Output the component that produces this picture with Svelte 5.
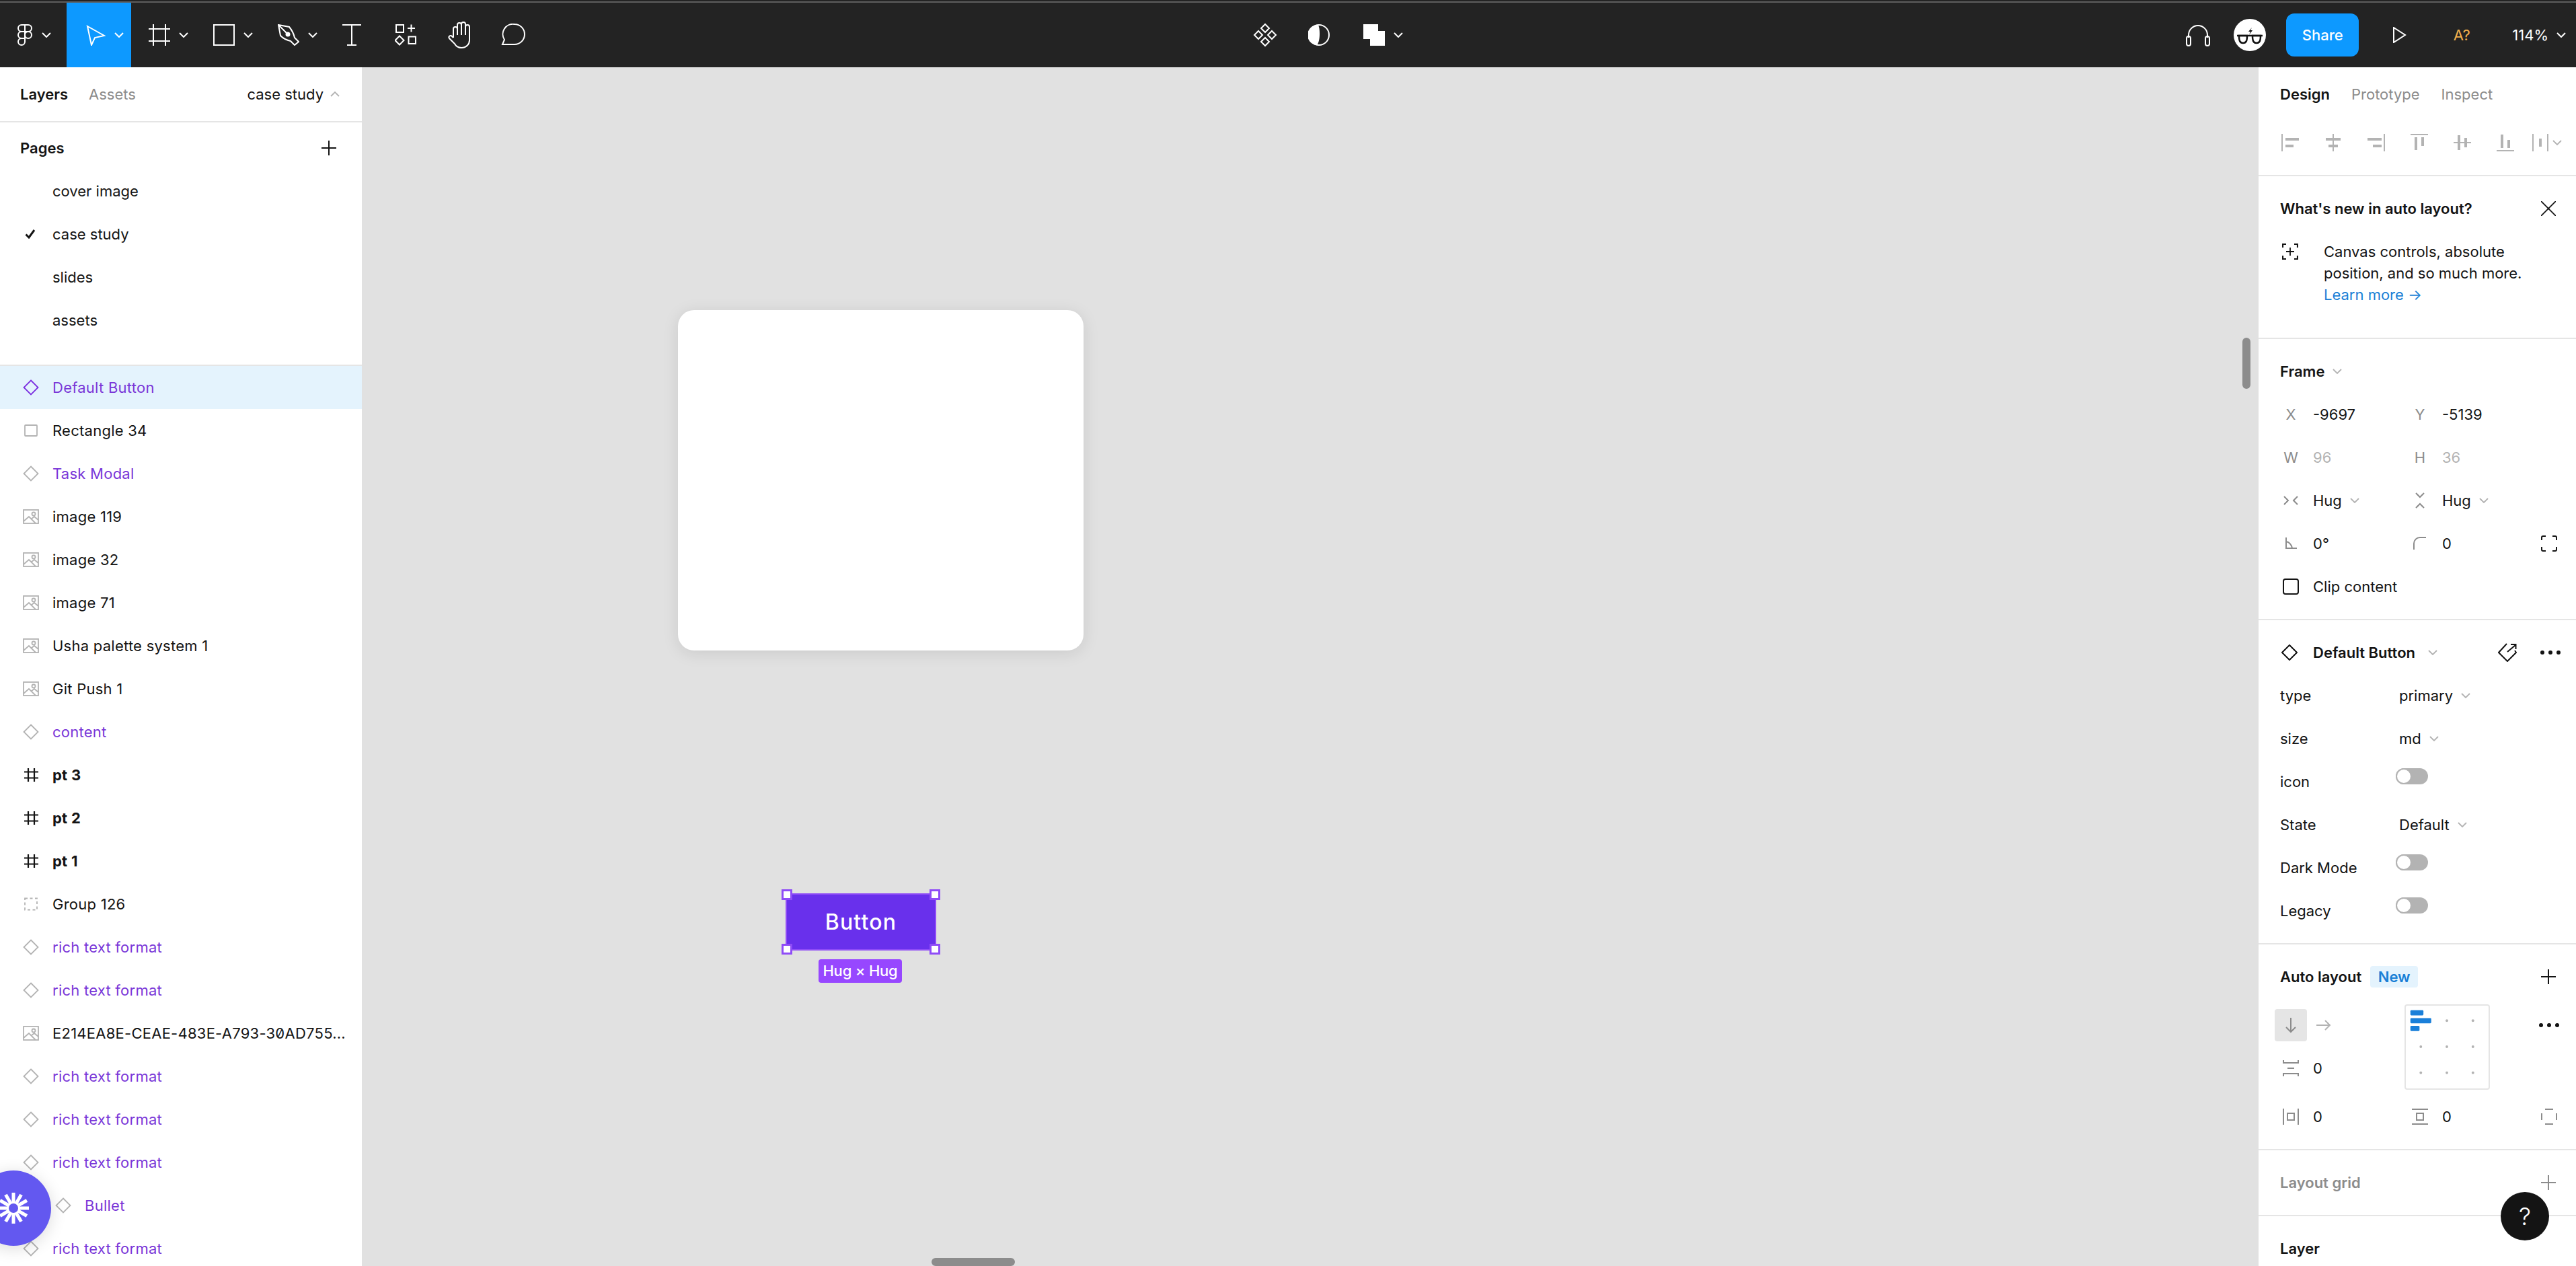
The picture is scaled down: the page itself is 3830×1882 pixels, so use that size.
<script>
  const pages = [
    { name: 'cover image' },
    { name: 'case study', current: true },
    { name: 'slides' },
    { name: 'assets' }
  ]

  const rtf = { name: 'rich text format', kind: 'comp' }
  const layers = [
    { name: 'Default Button', kind: 'comp', selected: true },
    { name: 'Rectangle 34', kind: 'rect' },
    { name: 'Task Modal', kind: 'comp' },
    { name: 'image 119', kind: 'image' },
    { name: 'image 32', kind: 'image' },
    { name: 'image 71', kind: 'image' },
    { name: 'Usha palette system 1', kind: 'image' },
    { name: 'Git Push 1', kind: 'image' },
    { name: 'content', kind: 'comp' },
    { name: 'pt 3', kind: 'frame' },
    { name: 'pt 2', kind: 'frame' },
    { name: 'pt 1', kind: 'frame' },
    { name: 'Group 126', kind: 'group' },
    rtf,
    rtf,
    { name: 'E214EA8E-CEAE-483E-A793-30AD755...', kind: 'image', mono: true },
    rtf,
    rtf,
    rtf,
    { name: 'Bullet', kind: 'comp', indent: true },
    rtf
  ]

  // lines and bars of the align buttons, in a 26 x 26 box
  const aligns = [
    { lines: [[1, 0, 1, 26]], bars: [[6, 6, 20, 4], [6, 16, 12, 4]] },
    { lines: [[13, 0, 13, 26]], bars: [[2, 6, 22, 4], [6, 16, 14, 4]] },
    { lines: [[25, 0, 25, 26]], bars: [[0, 6, 21, 4], [8, 16, 13, 4]] },
    { lines: [[0, 1, 26, 1]], bars: [[6, 5, 4, 19], [16, 5, 4, 13]] },
    { lines: [[0, 13, 26, 13]], bars: [[6, 2, 4, 22], [16, 6, 4, 14]] },
    { lines: [[0, 25, 26, 25]], bars: [[6, 1, 4, 20], [16, 9, 4, 12]] }
  ]

  const dots = [
    [63, 23], [103, 23],
    [23, 63], [63, 63], [103, 63],
    [23, 103], [63, 103], [103, 103]
  ]

  const spokes = Array.from({ length: 12 }, (_, i) => i * 30)
</script>

{#snippet chevron(cls)}
  <svg class="chev {cls}" viewBox="0 0 14 8"><path d="M1 1l6 6 6-6" /></svg>
{/snippet}

{#snippet layerIcon(kind, selected)}
  <svg class="layer-ic" class:sel={selected} class:dark={kind === 'frame'} viewBox="0 0 24 24">
    {#if kind === 'comp'}
      <path d="M12 1.5L22.5 12 12 22.5 1.5 12z" />
    {:else if kind === 'rect'}
      <rect x="3" y="4" width="18" height="16" rx="1" />
    {:else if kind === 'image'}
      <rect x="1" y="2" width="22" height="20" />
      <path d="M1 19l8-7 10 10M13 15l4-3 6 5" />
      <circle cx="16" cy="8" r="2.5" />
    {:else if kind === 'frame'}
      <path d="M8 2v20M17 2v20M2 7.5h21M2 16.5h21" />
    {:else}
      <rect x="3" y="3.5" width="18" height="17" stroke-dasharray="4 3.5" />
    {/if}
  </svg>
{/snippet}

<div class="app">
  <div class="topline"></div>
  <header class="toolbar">
    <button class="tool menu">
      <svg class="t-ic" width="32" height="32" viewBox="-5 0 32 32">
        <path d="M6 1h5v10H6a5 5 0 0 1 0-10zM11 1h5a5 5 0 0 1 0 10h-5zM6 11h5v10H6a5 5 0 0 1 0-10zM6 21h5v5a5 5 0 1 1-5-5z" />
        <circle cx="16" cy="16" r="5" />
      </svg>
      {@render chevron('white')}
    </button>
    <button class="tool active">
      <svg class="t-ic" width="32" height="32" viewBox="0 0 32 32"><path d="M5 3l25 14-14 3-5 11z" /></svg>
      {@render chevron('white')}
    </button>
    <button class="tool">
      <svg class="t-ic" width="32" height="32" viewBox="0 0 32 32"><path d="M7 0v32M25 0v32M0 7h32M0 25h32" /></svg>
      {@render chevron('white')}
    </button>
    <button class="tool">
      <svg class="t-ic" width="32" height="32" viewBox="0 0 32 32"><rect x="1" y="1" width="30" height="30" /></svg>
      {@render chevron('white')}
    </button>
    <button class="tool">
      <svg class="t-ic" width="32" height="32" viewBox="0 0 32 32">
        <path d="M1 1l16 3c5 6 7 11 8 16l6 6-6 5-6-6c-5-1-10-3-15-8zM1 1l12 12" />
        <circle cx="15" cy="15" r="2.5" fill="#fff" />
      </svg>
      {@render chevron('white')}
    </button>
    <button class="tool plain">
      <svg class="t-ic" width="28" height="32" viewBox="0 0 28 32"><path d="M0 1h28M14 1v30M7 31h14" /></svg>
    </button>
    <button class="tool plain">
      <svg class="t-ic" width="32" height="32" viewBox="0 0 32 32">
        <path d="M2 1h11v11H2zM24.5 0.500v11M19 6h11M7 17.500l6.500 6.500L7 30.500.5 24zM20.500 18.500H31V29H20.500z" />
      </svg>
    </button>
    <button class="tool plain">
      <svg class="t-ic" width="34" height="40" viewBox="0 0 34 40">
        <path d="M8 24V11a3 3 0 0 1 6 0v9V5a3 3 0 0 1 6 0v15V4a3 3 0 0 1 6 0v16V8a3 3 0 0 1 6 0v20c0 6-5 11-12 11-5 0-8-2-10-6L2 25a2.500 2.500 0 0 1 4-3l2 2" />
      </svg>
    </button>
    <button class="tool plain">
      <svg class="t-ic" width="36" height="34" viewBox="0 0 36 34">
        <path d="M20 1a15 15 0 0 1 0 30H2l3-7A15 15 0 0 1 20 1z" />
      </svg>
    </button>

    <div class="center-tools">
      <button class="tool plain">
        <svg class="t-ic" width="36" height="36" viewBox="0 0 36 36">
          <path d="M18 2l6 6-6 6-6-6zM8 12l6 6-6 6-6-6zM28 12l6 6-6 6-6-6zM18 22l6 6-6 6-6-6z" />
        </svg>
      </button>
      <button class="tool plain">
        <svg class="t-ic" width="32" height="32" viewBox="0 0 32 32">
          <circle cx="16" cy="16" r="15" />
          <path class="solid" d="M15 1A15 15 0 0 0 13 31C18 26 18 7 15 1z" />
        </svg>
      </button>
      <button class="tool">
        <svg class="t-ic" width="32" height="32" viewBox="0 0 32 32">
          <path class="solid" d="M0 0h22v10h10v22H10V22H0z" />
        </svg>
        {@render chevron('white')}
      </button>
    </div>

    <div class="right-tools">
      <button class="tool plain">
        <svg class="t-ic" width="36" height="34" viewBox="0 0 36 34">
          <path d="M4 21v-4a14 14 0 0 1 28 0v4" />
          <rect x="1" y="19" width="6" height="14" rx="3" />
          <rect x="29" y="19" width="6" height="14" rx="3" />
        </svg>
      </button>
      <svg class="avatar" width="48" height="48" viewBox="0 0 48 48">
        <circle cx="24" cy="24" r="24" fill="#fff" />
        <path d="M27 13l-5 6h3l-2 5 5-7h-3z" fill="#111" />
        <path d="M5 25h38" stroke="#111" stroke-width="2.500" fill="none" />
        <path d="M8 25h12c0 7-1 11-6 11s-6-4-6-11zM28 25h12c0 7-1 11-6 11s-6-4-6-11z" stroke="#111" stroke-width="2.500" fill="none" />
      </svg>
      <button class="share">Share</button>
      <button class="tool plain play">
        <svg class="t-ic" width="20" height="24" viewBox="0 0 20 24"><path d="M1 1l17 11L1 23z" /></svg>
      </button>
      <span class="font-warn">A?</span>
      <span class="zoom">114%</span>
      {@render chevron('white')}
    </div>
  </header>

  <div class="main">
    <aside class="left">
      <div class="left-tabs">
        <span class="strong">Layers</span>
        <span class="muted">Assets</span>
        <span class="page-name">case study</span>
        {@render chevron('grey up')}
      </div>

      <div class="pages">
        <div class="pages-head">
          <span class="strong">Pages</span>
          <svg class="plus" viewBox="0 0 22 22"><path d="M11 0v22M0 11h22" /></svg>
        </div>
        {#each pages as page}
          <div class="page-row">
            {#if page.current}
              <svg class="check" viewBox="0 0 16 14"><path d="M1.500 7.500l4.500 4.500 8-11" /></svg>
            {/if}
            {page.name}
          </div>
        {/each}
      </div>

      <div class="layers">
        {#each layers as layer}
          <div class="layer" class:selected={layer.selected} class:indent={layer.indent}>
            {@render layerIcon(layer.kind, layer.selected)}
            <span class="layer-name {layer.kind}" class:mono={layer.mono}>{layer.name}</span>
          </div>
        {/each}
      </div>
    </aside>

    <section class="canvas">
      <div class="card"></div>
      <div class="btn-node">
        Button
        <i class="handle tl"></i>
        <i class="handle tr"></i>
        <i class="handle bl"></i>
        <i class="handle br"></i>
      </div>
      <div class="size-tag">Hug × Hug</div>
      <div class="scroll-v"></div>
      <div class="scroll-h"></div>
    </section>

    <aside class="right">
      <div class="sec tabs-sec">
        <div class="right-tabs">
          <span class="strong">Design</span>
          <span class="muted">Prototype</span>
          <span class="muted">Inspect</span>
        </div>
        <div class="align-row">
          {#each aligns as a}
            <div class="align-cell">
              <svg width="26" height="26" viewBox="0 0 26 26">
                {#each a.lines as l}
                  <line x1={l[0]} y1={l[1]} x2={l[2]} y2={l[3]} />
                {/each}
                {#each a.bars as b}
                  <rect x={b[0]} y={b[1]} width={b[2]} height={b[3]} />
                {/each}
              </svg>
            </div>
          {/each}
          <div class="align-last">
            <svg width="24" height="26" viewBox="0 0 24 26">
              <line x1="1" y1="0" x2="1" y2="26" />
              <line x1="23" y1="0" x2="23" y2="26" />
              <rect x="10" y="7" width="4" height="12" />
            </svg>
            {@render chevron('grey')}
          </div>
        </div>
      </div>

      <div class="sec news">
        <div class="head">
          <span class="strong">What's new in auto layout?</span>
          <svg class="close" viewBox="0 0 22 22"><path d="M0 0l22 22M22 0L0 22" /></svg>
        </div>
        <div class="news-body">
          <svg class="news-ic" viewBox="0 0 24 24">
            <path d="M1 6V1h5M18 1h5v5M23 18v5h-5M6 23H1v-5" stroke-width="2.200" />
            <path d="M12 6v12M6 12h12" />
          </svg>
          <p>
            Canvas controls, absolute<br />
            position, and so much more.<br />
            <span class="link">Learn more →</span>
          </p>
        </div>
      </div>

      <div class="sec frame-sec">
        <div class="head">
          <span class="strong">Frame</span>
          {@render chevron('grey')}
        </div>
        <div class="props">
          <div class="prop"><span class="axis">X</span><span>-9697</span></div>
          <div class="prop"><span class="axis">Y</span><span>-5139</span></div>
          <div></div>

          <div class="prop off"><span class="axis">W</span><span>96</span></div>
          <div class="prop off"><span class="axis">H</span><span>36</span></div>
          <div></div>

          <div class="prop">
            <span class="axis"><svg class="g-ic" viewBox="0 0 24 24"><path d="M2 6l6 6-6 6M22 6l-6 6 6 6" /></svg></span>
            <span>Hug</span>{@render chevron('grey')}
          </div>
          <div class="prop">
            <span class="axis"><svg class="g-ic" viewBox="0 0 24 24"><path d="M6 1l6 6 6-6M6 23l6-6 6 6" /></svg></span>
            <span>Hug</span>{@render chevron('grey')}
          </div>
          <div></div>

          <div class="prop">
            <span class="axis"><svg class="g-ic" viewBox="0 0 24 24"><path d="M5 3v16h16M5 9c5 1 8 5 9 10" /></svg></span>
            <span>0°</span>
          </div>
          <div class="prop">
            <span class="axis"><svg class="g-ic" viewBox="0 0 24 24"><path d="M3 21v-9a9 9 0 0 1 9-9h9" /></svg></span>
            <span>0</span>
          </div>
          <div class="prop">
            <span class="axis"><svg class="k-ic" viewBox="0 0 24 24"><path d="M1 7V3a2 2 0 0 1 2-2h4M17 1h4a2 2 0 0 1 2 2v4M23 17v4a2 2 0 0 1-2 2h-4M7 23H3a2 2 0 0 1-2-2v-4" /></svg></span>
          </div>

          <div class="prop clip">
            <span class="axis"><i class="checkbox"></i></span>
            <span>Clip content</span>
          </div>
        </div>
      </div>

      <div class="sec comp-sec">
        <div class="head">
          <svg class="k-ic comp-ic" viewBox="0 0 24 24"><path d="M12 1l11 11-11 11L1 12z" /></svg>
          <span class="strong comp-name">Default Button</span>
          {@render chevron('grey')}
          <svg class="k-ic detach" viewBox="0 0 28 28"><path d="M13 1L1 14l13 13 13-13-2-3M14 13L26 3M19 2h7.500v7" /></svg>
          <svg class="more" viewBox="0 0 30 6"><circle cx="3" cy="3" r="3" /><circle cx="15" cy="3" r="3" /><circle cx="27" cy="3" r="3" /></svg>
        </div>
        <div class="var"><span>type</span><div class="var-val">primary {@render chevron('grey')}</div></div>
        <div class="var"><span>size</span><div class="var-val">md {@render chevron('grey')}</div></div>
        <div class="var"><span>icon</span><i class="toggle"></i></div>
        <div class="var"><span>State</span><div class="var-val">Default {@render chevron('grey')}</div></div>
        <div class="var"><span>Dark Mode</span><i class="toggle"></i></div>
        <div class="var"><span>Legacy</span><i class="toggle"></i></div>
      </div>

      <div class="sec auto-sec">
        <div class="head">
          <span class="strong">Auto layout</span>
          <span class="badge">New</span>
          <svg class="plus end" viewBox="0 0 22 22"><path d="M11 0v22M0 11h22" /></svg>
        </div>
        <div class="auto-top">
          <div class="auto-left">
            <div class="dir-row">
              <div class="dir on">
                <svg class="g-ic" viewBox="0 0 24 24"><path d="M12 1v21M5 15l7 7 7-7" /></svg>
              </div>
              <svg class="g-ic light" viewBox="0 0 24 24"><path d="M2 12h20M15 5l7 7-7 7" /></svg>
            </div>
            <div class="prop">
              <span class="axis"><svg class="g-ic" viewBox="0 0 24 24"><path d="M1 0v4h22V0M7 12h10M1 24v-4h22v4" /></svg></span>
              <span>0</span>
            </div>
          </div>
          <svg class="align-box" width="127" height="127" viewBox="0 0 127 127">
            <rect class="bar" x="7" y="7" width="20" height="8" rx="1.500" />
            <rect class="bar" x="7" y="19" width="32" height="8" rx="1.500" />
            <rect class="bar" x="7" y="31" width="14" height="8" rx="1.500" />
            {#each dots as d}
              <circle cx={d[0]} cy={d[1]} r="2" />
            {/each}
          </svg>
          <svg class="more auto-more" viewBox="0 0 30 6"><circle cx="3" cy="3" r="3" /><circle cx="15" cy="3" r="3" /><circle cx="27" cy="3" r="3" /></svg>
        </div>
        <div class="props">
          <div class="prop">
            <span class="axis"><svg class="g-ic" viewBox="0 0 24 24"><path d="M1 0v24M23 0v24M7 7h10v10H7z" /></svg></span>
            <span>0</span>
          </div>
          <div class="prop">
            <span class="axis"><svg class="g-ic" viewBox="0 0 24 24"><path d="M0 1h24M0 23h24M7 7h10v10H7z" /></svg></span>
            <span>0</span>
          </div>
          <div class="prop">
            <span class="axis"><svg class="g-ic" viewBox="0 0 24 24"><path d="M6 1h12M6 23h12M1 7v10M23 7v10" /></svg></span>
          </div>
        </div>
      </div>

      <div class="sec grid-sec">
        <div class="head">
          <span class="strong dim">Layout grid</span>
          <svg class="plus end dim-plus" viewBox="0 0 22 22"><path d="M11 0v22M0 11h22" /></svg>
        </div>
      </div>

      <div class="sec">
        <div class="head"><span class="strong">Layer</span></div>
      </div>
    </aside>
  </div>

  <button class="help">?</button>

  <div class="loom">
    <svg width="56" height="56" viewBox="-28 -28 56 56">
      {#each spokes as a}
        <rect x="-2.500" y="-23" width="5" height="15" fill="#fff" transform="rotate({a})" />
      {/each}
      <circle r="10" fill="#fff" />
      <circle r="7" fill="#6358f0" />
    </svg>
  </div>
</div>

<style>
  :global(body) {
    margin: 0;
    background: #e1e1e1;
  }

  .app {
    position: relative;
    width: 3830px;
    height: 1882px;
    overflow: hidden;
    font-family: Inter, "Noto Sans", sans-serif;
    font-size: 22px;
    color: #141414;
    line-height: 32px;
  }

  p { margin: 0; }
  button {
    border: 0;
    background: none;
    padding: 0;
    font: inherit;
    color: inherit;
  }

  .topline {
    height: 2px;
    background: #232323;
    border-bottom: 2px solid #5e5e5e;
  }

  .toolbar {
    display: flex;
    height: 96px;
    background: #232323;
    color: #fff;
  }

  .tool {
    display: flex;
    align-items: center;
    flex: none;
    width: 96px;
    height: 96px;
    padding-left: 26px;
    gap: 13px;
    box-sizing: border-box;
  }
  .tool.menu { width: 99px; padding-left: 21px; gap: 9px; }
  .tool.active { background: #0d99ff; }
  .tool.plain { width: 80px; padding: 0; justify-content: center; }
  .t-ic { fill: none; stroke: #fff; stroke-width: 2; flex: none; }
  .t-ic .solid { fill: #fff; stroke: none; }

  .chev { width: 14px; height: 8px; fill: none; stroke: #b3b3b3; stroke-width: 1.800; flex: none; }
  .chev.white { stroke: #fff; stroke-width: 2; }
  .chev.up { transform: rotate(180deg); }

  .center-tools { display: flex; margin-left: 1038px; }

  .right-tools {
    display: flex;
    align-items: center;
    margin-left: auto;
    padding-right: 15px;
  }
  .avatar { margin: 0 30px 0 13px; flex: none; }
  .share {
    width: 108px;
    height: 64px;
    border-radius: 12px;
    background: #0d99ff;
    color: #fff;
    font-weight: 500;
    text-align: center;
  }
  .play { margin-left: 21px; }
  .font-warn { width: 80px; margin-left: 12px; text-align: center; color: #f5b14c; }
  .zoom { margin-left: 35px; margin-right: 12px; }

  .main { display: flex; height: 1782px; }

  .left {
    width: 538px;
    flex: none;
    background: #fff;
    overflow: hidden;
  }

  .strong { font-weight: 600; }
  .muted { color: #8c8c8c; }

  .left-tabs {
    display: flex;
    align-items: center;
    height: 80px;
    padding: 0 33px 0 30px;
    border-bottom: 2px solid #e5e5e5;
  }
  .left-tabs .muted { margin-left: 31px; }
  .page-name { margin-left: auto; margin-right: 10px; }

  .pages { padding: 6px 0 34px; border-bottom: 2px solid #e5e5e5; }
  .pages-head {
    display: flex;
    justify-content: space-between;
    align-items: center;
    height: 64px;
    padding: 0 38px 0 30px;
  }
  .plus { width: 22px; height: 22px; stroke: #141414; stroke-width: 2; fill: none; flex: none; }
  .page-row {
    position: relative;
    display: flex;
    align-items: center;
    height: 64px;
    padding-left: 78px;
  }
  .check {
    position: absolute;
    left: 37px;
    width: 16px;
    height: 14px;
    fill: none;
    stroke: #141414;
    stroke-width: 3;
  }

  .layer {
    display: flex;
    align-items: center;
    gap: 20px;
    height: 64px;
    padding-left: 34px;
  }
  .layer.selected { background: #e4f3fd; }
  .layer.indent { padding-left: 82px; }
  .layer-ic { width: 24px; height: 24px; flex: none; fill: none; stroke: #b3b3b3; stroke-width: 1.800; }
  .layer-ic.sel { stroke: #7b2fe0; }
  .layer-ic.dark { stroke: #141414; stroke-width: 2.200; }
  .layer-name { white-space: nowrap; letter-spacing: 0.25px; }
  .layer-name.comp { color: #7a37d8; }
  .layer-name.frame { font-weight: 700; }
  .layer-name.mono { font-feature-settings: "zero"; }

  .canvas {
    position: relative;
    flex: 1;
    background: #e1e1e1;
  }
  .card {
    position: absolute;
    left: 470px;
    top: 361px;
    width: 603px;
    height: 506px;
    border-radius: 24px;
    background: #fff;
    box-shadow: 0 4px 24px rgba(0, 0, 0, 0.1);
  }
  .btn-node {
    position: absolute;
    left: 630px;
    top: 1228px;
    width: 224px;
    height: 85px;
    box-sizing: border-box;
    border: 2px solid #8f4cf7;
    background: #6930ec;
    color: #fff;
    font-size: 32px;
    font-weight: 500;
    letter-spacing: 1.2px;
    line-height: 81px;
    text-align: center;
  }
  .handle {
    position: absolute;
    box-sizing: border-box;
    width: 16px;
    height: 16px;
    background: #fff;
    border: 3px solid #8f4cf7;
  }
  .tl { left: -8px; top: -8px; }
  .tr { right: -8px; top: -8px; }
  .bl { left: -8px; bottom: -8px; }
  .br { right: -8px; bottom: -8px; }
  .size-tag {
    position: absolute;
    left: 679px;
    top: 1326px;
    width: 124px;
    height: 35px;
    border-radius: 4px;
    background: #9747ff;
    color: #fff;
    font-weight: 500;
    letter-spacing: -0.2px;
    line-height: 35px;
    text-align: center;
    white-space: nowrap;
  }
  .scroll-v {
    position: absolute;
    left: 2796px;
    top: 402px;
    width: 12px;
    height: 76px;
    border-radius: 6px;
    background: #8c8c8c;
  }
  .scroll-h {
    position: absolute;
    left: 847px;
    top: 1770px;
    width: 124px;
    height: 12px;
    border-radius: 6px;
    background: #8c8c8c;
  }

  .right {
    width: 472px;
    flex: none;
    background: #fff;
    overflow: hidden;
  }
  .sec { padding-bottom: 16px; border-bottom: 2px solid #e5e5e5; box-sizing: border-box; }
  .sec:last-child { border-bottom: 0; }
  .tabs-sec { height: 162px; }
  .right-tabs {
    display: flex;
    align-items: center;
    gap: 32px;
    height: 80px;
    padding-left: 32px;
  }
  .align-row { display: flex; align-items: center; height: 64px; padding-left: 15px; }
  .align-cell { width: 64px; display: flex; justify-content: center; }
  .align-row line { stroke: #b3b3b3; stroke-width: 2; }
  .align-row rect { fill: #b3b3b3; }
  .align-last { display: flex; align-items: center; gap: 6px; margin-left: 8px; }

  .head {
    display: flex;
    align-items: center;
    box-sizing: border-box;
    height: 80px;
    padding: 16px 30px 0 32px;
    gap: 12px;
  }
  .close { width: 22px; height: 22px; margin-left: auto; fill: none; stroke: #141414; stroke-width: 1.800; }
  .news { height: 242px; }
  .news-body { display: flex; padding: 16px 0 0 32px; }
  .news-ic { width: 24px; height: 24px; margin: 4px 38px 0 3px; flex: none; fill: none; stroke: #141414; stroke-width: 1.800; }
  .link { color: #1a7fd6; }

  .props {
    display: grid;
    grid-template-columns: 192px 192px 32px;
    padding-left: 32px;
  }
  .prop {
    display: flex;
    align-items: center;
    height: 64px;
    gap: 12px;
  }
  .prop.clip { grid-column: 1 / -1; }
  .prop.off { color: #b3b3b3; }
  .axis {
    display: flex;
    align-items: center;
    justify-content: center;
    flex: none;
    width: 32px;
    margin-right: 5px;
    margin-left: 0;
    color: #8c8c8c;
  }
  .g-ic { width: 24px; height: 24px; fill: none; stroke: #8c8c8c; stroke-width: 2; flex: none; }
  .g-ic.light { stroke: #b3b3b3; }
  .k-ic { width: 24px; height: 24px; fill: none; stroke: #141414; stroke-width: 2; flex: none; }
  .checkbox {
    display: block;
    box-sizing: border-box;
    width: 24px;
    height: 24px;
    border: 2px solid #141414;
    border-radius: 4px;
  }

  .comp-sec .head { padding-left: 34px; gap: 0; }
  .comp-name { margin: 0 19px 0 23px; }
  .comp-ic { flex: none; }
  .detach { width: 28px; height: 28px; margin-left: auto; margin-right: 35px; }
  .more { width: 30px; height: 6px; fill: #141414; flex: none; margin-right: -7px; }

  .var {
    display: flex;
    align-items: center;
    height: 64px;
    padding-left: 32px;
  }
  .var > span { width: 177px; flex: none; }
  .var-val { display: flex; align-items: center; gap: 12px; }
  .toggle {
    position: relative;
    display: block;
    width: 48px;
    height: 24px;
    margin: -16px 0 0 -5px;
    border-radius: 12px;
    background: #b3b3b3;
  }
  .toggle::before {
    content: '';
    position: absolute;
    left: 0;
    top: 0;
    box-sizing: border-box;
    width: 24px;
    height: 24px;
    border: 2px solid #b3b3b3;
    border-radius: 50%;
    background: #fff;
  }

  .auto-sec .head { gap: 13px; }
  .badge {
    height: 32px;
    width: 71px;
    text-align: center;
    border-radius: 4px;
    background: #e4f3fd;
    color: #1a7fd6;
    font-weight: 600;
  }
  .end { margin-left: auto; margin-right: 0; }
  .auto-top {
    display: flex;
    align-items: flex-start;
    box-sizing: border-box;
    height: 144px;
    padding: 8px 0 0 32px;
  }
  .auto-left { width: 185px; flex: none; }
  .dir-row { display: flex; align-items: center; height: 64px; gap: 12px; margin-left: -8px; }
  .dir {
    display: flex;
    align-items: center;
    justify-content: center;
    width: 48px;
    height: 48px;
    border-radius: 4px;
  }
  .dir.on { background: #e5e5e5; }
  .align-box {
    flex: none;
    box-sizing: border-box;
    margin-top: 1px;
    border: 2px solid #e5e5e5;
    border-radius: 4px;
    overflow: hidden;
  }
  .align-box circle { fill: #b3b3b3; }
  .align-box .bar { fill: #1a7fd9; }
  .auto-more { margin: 29px 0 0 73px; }

  .dim { color: #8c8c8c; }
  .dim-plus { stroke: #8c8c8c; }

  .help {
    position: absolute;
    left: 3718px;
    top: 1772px;
    width: 72px;
    height: 72px;
    border-radius: 50%;
    background: #141414;
    color: #fff;
    font-size: 36px;
    font-weight: 300;
    line-height: 72px;
    text-align: center;
  }
  .loom {
    position: absolute;
    left: -36px;
    top: 1740px;
    display: flex;
    align-items: center;
    justify-content: center;
    width: 112px;
    height: 112px;
    border-radius: 50%;
    background: #6358f0;
    box-shadow: 0 4px 24px rgba(0, 0, 0, 0.14);
  }
</style>
